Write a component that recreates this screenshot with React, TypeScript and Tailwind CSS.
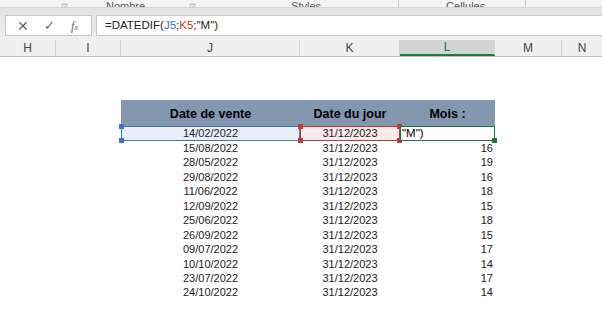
import React from "react";

const rows = [
  ["14/02/2022", "31/12/2023", ""],
  ["15/08/2022", "31/12/2023", "16"],
  ["28/05/2022", "31/12/2023", "19"],
  ["29/08/2022", "31/12/2023", "16"],
  ["11/06/2022", "31/12/2023", "18"],
  ["12/09/2022", "31/12/2023", "15"],
  ["25/06/2022", "31/12/2023", "18"],
  ["26/09/2022", "31/12/2023", "15"],
  ["09/07/2022", "31/12/2023", "17"],
  ["10/10/2022", "31/12/2023", "14"],
  ["23/07/2022", "31/12/2023", "17"],
  ["24/10/2022", "31/12/2023", "14"],
];

const cols = [
  { name: "H", w: "w-[56px]" },
  { name: "I", w: "w-[65px]" },
  { name: "J", w: "w-[179px]" },
  { name: "K", w: "w-[100px]" },
  { name: "L", w: "w-[95px]", active: true },
  { name: "M", w: "w-[67px]" },
  { name: "N", w: "flex-1" },
];

function Handle({ className, color }: { className: string; color: string }) {
  return <span className={`absolute h-[5px] w-[5px] ${color} ${className}`} />;
}

export default function App() {
  return (
    <div className="h-[325px] w-[602px] overflow-hidden bg-white font-['Liberation_Sans',Arial,sans-serif]">
      {/* ribbon group labels, cut off like in the capture */}
      <div className="relative h-[8px] overflow-hidden border-b border-[#d6d6d6] bg-[#f4f4f4] text-[11px] text-[#555]">
        <div className="flex h-full items-end leading-none">
          <span className="ml-[61px] -mb-[4px] text-[8px] text-[#999]">⊡</span>
          <span className="ml-[38px] -mb-[5px]">Nombre</span>
          <span className="ml-[44px] -mb-[4px] text-[8px] text-[#999]">⊡</span>
          <span className="ml-[95px] -mb-[5px]">Styles</span>
          <span className="ml-[77px] h-[8px] w-px bg-[#c8c8c8]" />
          <span className="ml-[47px] -mb-[5px]">Cellules</span>
          <span className="ml-[40px] h-[8px] w-px bg-[#c8c8c8]" />
        </div>
      </div>

      {/* formula bar */}
      <div className="flex h-[32px] bg-gradient-to-b from-[#e2e2e2] to-[#efefef] pt-[7px] pb-[4px] pl-[5px]">
        <div className="flex h-[21px] w-[87px] items-center border border-[#c8c8c8] bg-white text-[#666]">
          <span className="ml-[11px] text-[14px] leading-none">✕</span>
          <span className="ml-[15px] text-[13px] leading-none">✓</span>
          <span className="ml-[16px] font-['Liberation_Serif',serif] text-[12px] italic leading-none">
            f<span className="text-[9px]">x</span>
          </span>
        </div>
        <div className="ml-[4px] flex h-[21px] flex-1 items-center border border-[#c8c8c8] border-r-0 bg-white pl-[8px] text-[11.5px] text-[#222]">
          =DATEDIF(<span className="text-[#3d6fc4]">J5</span>;<span className="text-[#c0392b]">K5</span>;"M")
        </div>
      </div>

      {/* column headers */}
      <div className="flex h-[17px] border-b border-[#bdbdbd] bg-[#f0f0f0] text-[12px] text-[#444]">
        {cols.map((c, i) => (
          <div
            key={c.name}
            className={`flex items-center justify-center ${c.w} ${i < cols.length - 1 ? "border-r border-[#d4d4d4]" : ""} ${
              c.active ? "border-b-2 border-b-[#217346] bg-[#d3d3d3] text-[#217346]" : ""
            }`}
          >
            {c.name}
          </div>
        ))}
      </div>

      {/* sheet */}
      <div className="flex pt-[43px]">
        <div className="w-[121px]" />
        <div className="w-[374px] text-[11px] text-[#222]">
          <div className="flex h-[26px] items-center bg-[#8497b0] pt-[2px] text-[12.5px] font-bold text-black">
            <div className="w-[179px] text-center">Date de vente</div>
            <div className="w-[100px] text-center">Date du jour</div>
            <div className="w-[95px] text-center">Mois :</div>
          </div>
          {rows.map(([a, b, c], i) =>
            i === 0 ? (
              <div key={i} className="flex h-[15px]">
                <div className="relative flex w-[179px] items-center justify-center border-[1.5px] border-[#3f73c9] bg-[#eaeef7]">
                  {a}
                  <Handle color="bg-[#3f73c9]" className="-left-[3px] -top-[3px]" />
                  <Handle color="bg-[#3f73c9]" className="-left-[3px] -bottom-[3px]" />
                </div>
                <div className="relative flex w-[100px] items-center justify-center border-[1.5px] border-[#c0393b] bg-[#fbe9e9]">
                  {b}
                  <Handle color="bg-[#c0393b]" className="-left-[3px] -top-[3px]" />
                  <Handle color="bg-[#c0393b]" className="-left-[3px] -bottom-[3px]" />
                  <Handle color="bg-[#c0393b]" className="-right-[3px] -top-[3px]" />
                  <Handle color="bg-[#c0393b]" className="-right-[3px] -bottom-[3px]" />
                </div>
                <div className="relative flex w-[95px] items-center border-[1.5px] border-[#217346] bg-white pl-[1px] text-[11.5px] text-black">
                  "M")
                  <Handle color="bg-[#217346]" className="-right-[3px] -bottom-[3px]" />
                </div>
              </div>
            ) : (
              <div key={i} className="flex h-[14.45px] leading-[14.45px]">
                <div className="w-[179px] text-center">{a}</div>
                <div className="w-[100px] text-center">{b}</div>
                <div className="w-[95px] pr-[2px] text-right">{c}</div>
              </div>
            )
          )}
        </div>
      </div>
    </div>
  );
}
